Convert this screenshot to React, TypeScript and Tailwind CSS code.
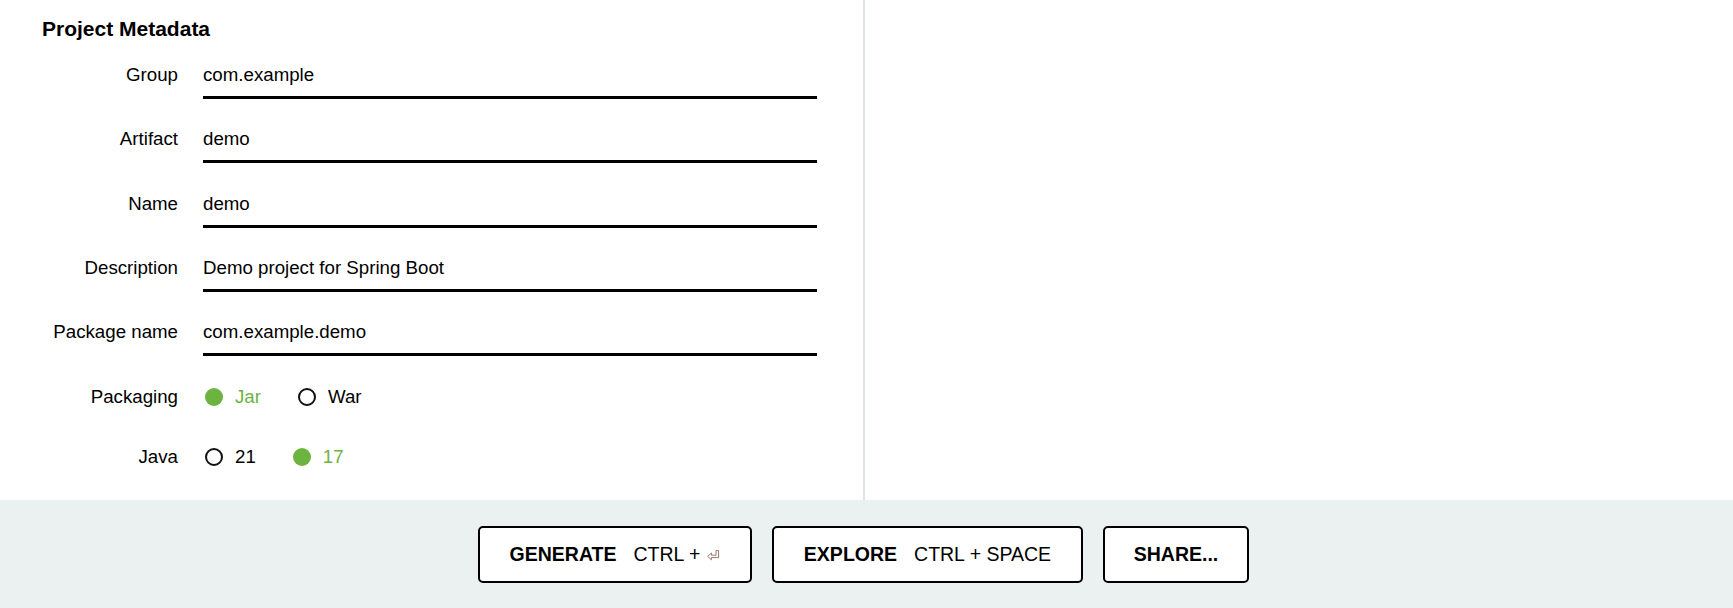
import React from "react";

interface FieldProps {
  label: string;
  value: string;
}

function Field({ label, value }: FieldProps) {
  return (
    <div className="flex items-start h-[39px]">
      <div className="w-[178px] pt-[1px] text-right leading-[28px] text-black">{label}</div>
      <div className="ml-[25px] w-[614px] h-[39px] pt-[1px] border-b-[3px] border-black leading-[28px] text-black">
        {value}
      </div>
    </div>
  );
}

interface RadioGroupProps {
  label: string;
  options: string[];
  selected: string;
}

function RadioGroup({ label, options, selected }: RadioGroupProps) {
  return (
    <div className="flex items-center h-[28px]">
      <div className="w-[178px] text-right leading-[28px] text-black">{label}</div>
      <div className="ml-[25px] flex items-center">
        {options.map((opt) => {
          const active = opt === selected;
          return (
            <div key={opt} className="flex items-center mr-[35px]">
              {active ? (
                <span className="ml-[2px] w-[18px] h-[18px] rounded-full bg-[#6db33f]" />
              ) : (
                <span className="ml-[2px] w-[18px] h-[18px] rounded-full border-2 border-[#111] bg-white" />
              )}
              <span
                className={
                  active
                    ? "ml-[12px] leading-[28px] text-[#6db33f]"
                    : "ml-[12px] leading-[28px] text-black"
                }
              >
                {opt}
              </span>
            </div>
          );
        })}
      </div>
    </div>
  );
}

function ReturnGlyph() {
  return (
    <svg width="13" height="11" viewBox="0 0 13 11" className="ml-[7px] mt-[1px]">
      <path
        d="M9 0.6 H11.6 V7.6 H4.4 V9.8 L0.7 6.4 L4.4 3 V5.2 H9 Z"
        fill="none"
        stroke="#9a7a6e"
        strokeWidth="1"
        strokeLinejoin="round"
      />
    </svg>
  );
}

export default function App() {
  const fields: FieldProps[] = [
    { label: "Group", value: "com.example" },
    { label: "Artifact", value: "demo" },
    { label: "Name", value: "demo" },
    { label: "Description", value: "Demo project for Spring Boot" },
    { label: "Package name", value: "com.example.demo" },
  ];

  return (
    <div className="w-[1733px] h-[608px] flex flex-col bg-white font-['Liberation_Sans',Arial,sans-serif] text-[18.7px]">
      <div className="flex h-[500px]">
        <div className="w-[865px] border-r-2 border-[#dde5e7] pt-[15px]">
          <h2 className="pl-[42px] text-[21px] font-bold leading-[28px] text-black">
            Project Metadata
          </h2>
          <div className="mt-[17px] flex flex-col gap-[25.35px]">
            {fields.map((f) => (
              <Field key={f.label} label={f.label} value={f.value} />
            ))}
          </div>
          <div className="mt-[26.5px] flex flex-col gap-[32px]">
            <RadioGroup label="Packaging" options={["Jar", "War"]} selected="Jar" />
            <RadioGroup label="Java" options={["21", "17"]} selected="17" />
          </div>
        </div>
        <div className="flex-1" />
      </div>

      <div className="h-[108px] bg-[#ebf0f0] flex items-center justify-center gap-[20px] pr-[6px] text-[19.5px] text-black">
        <button className="w-[274px] h-[57px] pt-[2px] bg-white border-2 border-black rounded-[5px] flex items-center justify-center">
          <span className="font-bold">GENERATE</span>
          <span className="ml-[17px]">CTRL +</span>
          <ReturnGlyph />
        </button>
        <button className="w-[311px] h-[57px] pt-[2px] bg-white border-2 border-black rounded-[5px] flex items-center justify-center">
          <span className="font-bold">EXPLORE</span>
          <span className="ml-[17px]">CTRL + SPACE</span>
        </button>
        <button className="w-[146px] h-[57px] pt-[2px] bg-white border-2 border-black rounded-[5px] flex items-center justify-center">
          <span className="font-bold">SHARE...</span>
        </button>
      </div>
    </div>
  );
}
